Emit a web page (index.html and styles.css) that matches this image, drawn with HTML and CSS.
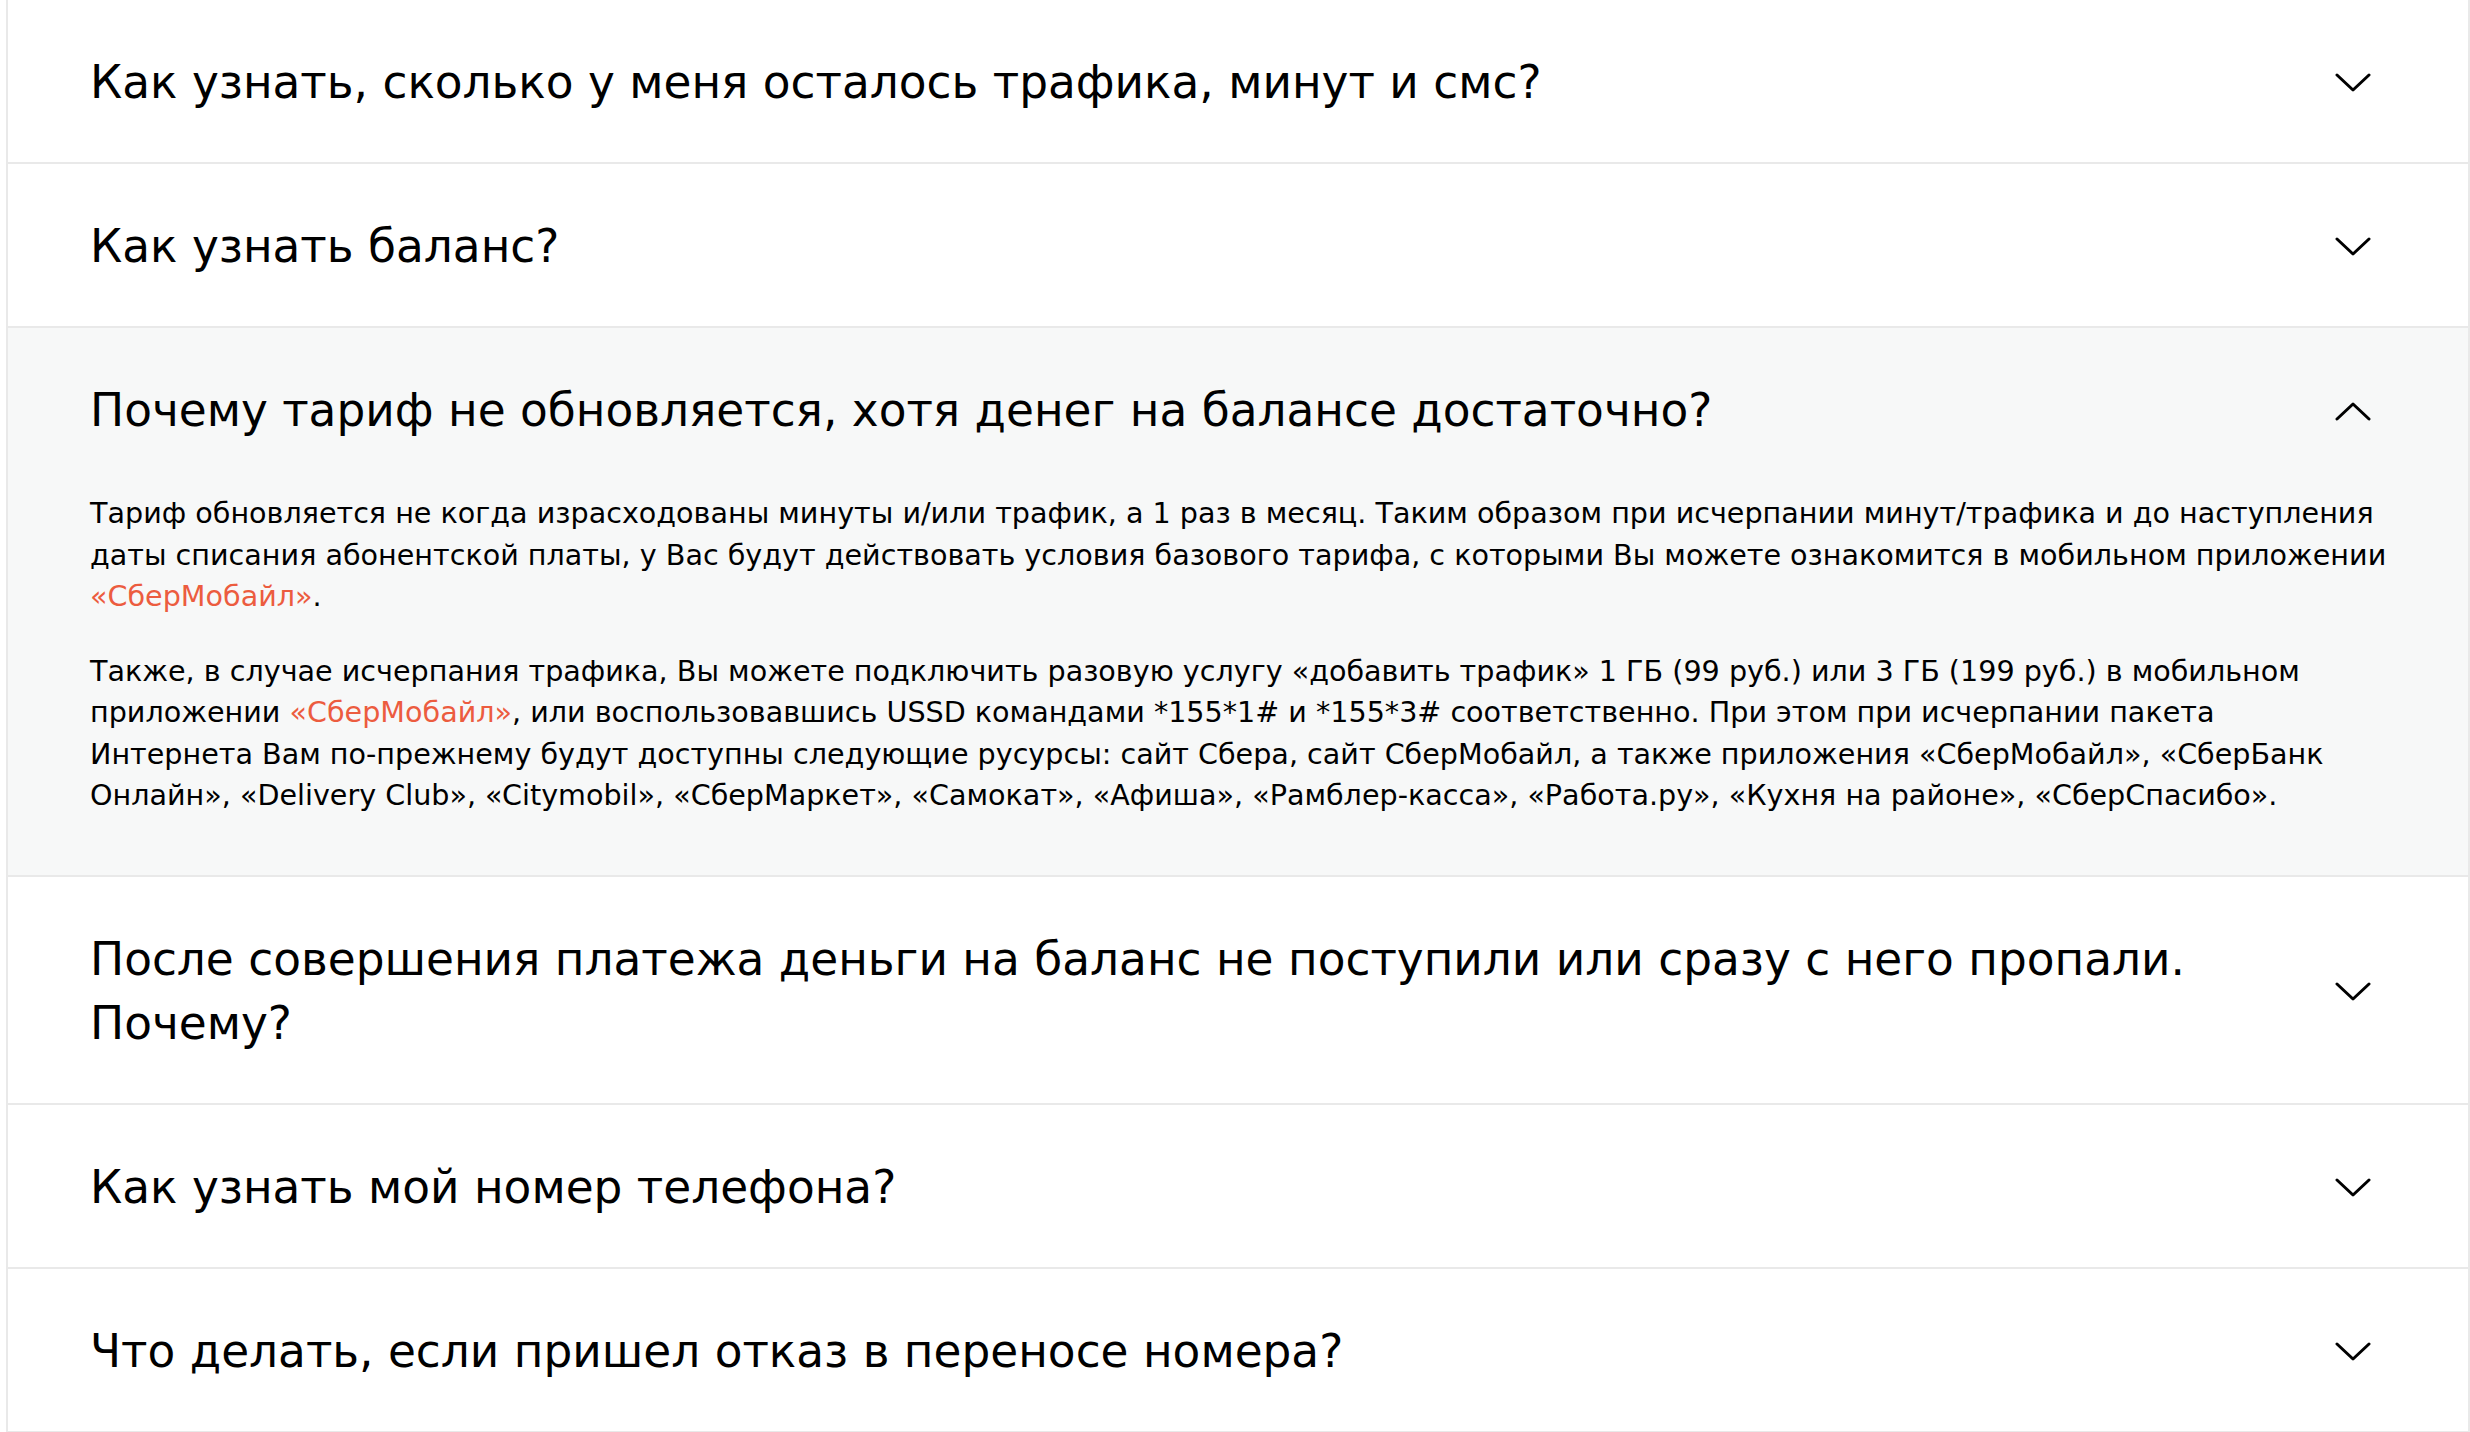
FILE: index.html
```html
<!DOCTYPE html>
<html lang="ru">
<head>
<meta charset="utf-8">
<title>FAQ</title>
<link rel="stylesheet" href="styles.css">
</head>
<body>
<div class="faq">
  <div class="item">
    <div class="head">
      <div class="q">Как узнать, сколько у меня осталось трафика, минут и смс?</div>
      <svg class="chev" viewBox="0 0 36 20" width="36" height="20"><polyline points="2,2 18,17 34,2"/></svg>
    </div>
  </div>
  <div class="item">
    <div class="head">
      <div class="q">Как узнать баланс?</div>
      <svg class="chev" viewBox="0 0 36 20" width="36" height="20"><polyline points="2,2 18,17 34,2"/></svg>
    </div>
  </div>
  <div class="item open">
    <div class="head">
      <div class="q">Почему тариф не обновляется, хотя денег на балансе достаточно?</div>
      <svg class="chev" viewBox="0 0 36 20" width="36" height="20"><polyline points="2,18 18,3 34,18"/></svg>
    </div>
    <div class="body">
      <p>Тариф обновляется не когда израсходованы минуты и/или трафик, а 1 раз в месяц. Таким образом при исчерпании минут/трафика и до наступления даты списания абонентской платы, у Вас будут действовать условия базового тарифа, с которыми Вы можете ознакомится в мобильном приложении <a href="#">«СберМобайл»</a>.</p>
      <p>Также, в случае исчерпания трафика, Вы можете подключить разовую услугу «добавить трафик» 1 ГБ (99 руб.) или 3 ГБ (199 руб.) в мобильном приложении <a href="#">«СберМобайл»</a>, или воспользовавшись USSD командами *155*1# и *155*3# соответственно. При этом при исчерпании пакета<br>Интернета Вам по-прежнему будут доступны следующие русурсы: сайт Сбера, сайт СберМобайл, а также приложения «СберМобайл», «СберБанк Онлайн», «Delivery Club», «Citymobil», «СберМаркет», «Самокат», «Афиша», «Рамблер-касса», «Работа.ру», «Кухня на районе», «СберСпасибо».</p>
    </div>
  </div>
  <div class="item">
    <div class="head">
      <div class="q">После совершения платежа деньги на баланс не поступили или сразу с него пропали. Почему?</div>
      <svg class="chev" viewBox="0 0 36 20" width="36" height="20"><polyline points="2,2 18,17 34,2"/></svg>
    </div>
  </div>
  <div class="item">
    <div class="head">
      <div class="q">Как узнать мой номер телефона?</div>
      <svg class="chev" viewBox="0 0 36 20" width="36" height="20"><polyline points="2,2 18,17 34,2"/></svg>
    </div>
  </div>
  <div class="item">
    <div class="head">
      <div class="q">Что делать, если пришел отказ в переносе номера?</div>
      <svg class="chev" viewBox="0 0 36 20" width="36" height="20"><polyline points="2,2 18,17 34,2"/></svg>
    </div>
  </div>
</div>
</body>
</html>
```
FILE: styles.css
```css
html, body {
  margin: 0;
  padding: 0;
  background: #ffffff;
}
body {
  font-family: "DejaVu Sans", sans-serif;
  color: #000000;
}
.faq {
  margin-left: 6px;
  border-left: 2px solid #e9e9e9;
  border-right: 2px solid #e9e9e9;
  background: #ffffff;
}
.item {
  border-bottom: 2px solid #e9e9e9;
}
.item.open {
  background: #f7f8f8;
}
.head {
  display: flex;
  align-items: center;
  padding: 51px 97px 47px 82px;
}
.q {
  flex: 1;
  font-size: 45.4px;
  line-height: 64px;
  padding-right: 100px;
}
.chev {
  flex: none;
  display: block;
}
.chev polyline {
  fill: none;
  stroke: #000000;
  stroke-width: 3;
  stroke-linecap: round;
  stroke-linejoin: round;
}
.body {
  padding: 3px 60px 58px 82px;
  font-size: 28.6px;
  line-height: 41.5px;
}
.body p {
  margin: 0 0 33px 0;
}
.body p:last-child {
  margin-bottom: 0;
}
.body a {
  color: #ec5c3f;
  text-decoration: none;
}
```
